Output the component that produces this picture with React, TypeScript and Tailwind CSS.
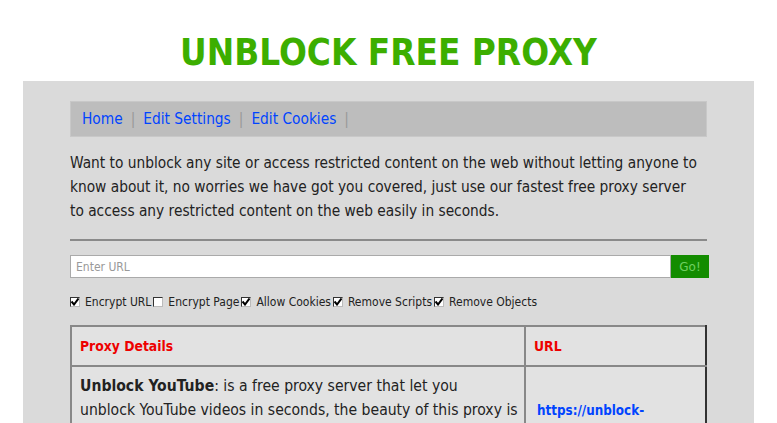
const options = [
  { label: "Encrypt URL", checked: true },
  { label: "Encrypt Page", checked: false },
  { label: "Allow Cookies", checked: true },
  { label: "Remove Scripts", checked: true },
  { label: "Remove Objects", checked: true },
];

const Box = ({ checked }: { checked: boolean }) => (
  <span className="inline-flex h-[10px] w-[10px] shrink-0 items-center justify-center border border-t-[#333] border-l-[#333] border-r-[#bbb] border-b-[#bbb] bg-white">
    {checked && (
      <svg width="8" height="8" viewBox="0 0 8 8">
        <path d="M0.5 3.5 L3 6.5 L7.5 0.5" fill="none" stroke="#000" strokeWidth="2" />
      </svg>
    )}
  </span>
);

export default function App() {
  return (
    <div className="min-h-screen bg-white font-['DejaVu_Sans',sans-serif] text-[#222]">
      <h1 className="pt-[35px] pb-[9.5px] text-center text-[36.5px] leading-[36.5px] font-bold text-[#3cae00] [font-stretch:condensed]">
        UNBLOCK FREE PROXY
      </h1>
      <div className="mx-[23px] bg-[#dadada] px-[47px] pt-[20px] pb-[40px]">
        <div className="flex h-[36px] items-center border border-[#c8c8c8] bg-[#bdbdbd] pl-[11px] text-[15.3px] text-[#0044ff] [font-stretch:condensed]">
          <a className="cursor-pointer">Home</a>
          <span className="mx-[8px] text-[#999]">|</span>
          <a className="cursor-pointer">Edit Settings</a>
          <span className="mx-[8px] text-[#999]">|</span>
          <a className="cursor-pointer">Edit Cookies</a>
          <span className="mx-[8px] text-[#999]">|</span>
        </div>
        <p className="mt-[14px] pr-[5px] text-[15.3px] leading-[24px] [font-stretch:condensed]">
          Want to unblock any site or access restricted content on the web without letting anyone to know about it, no
          worries we have got you covered, just use our fastest free proxy server to access any restricted content on
          the web easily in seconds.
        </p>
        <div className="mt-[16px] h-[2px] bg-[#8a8a8a]" />
        <div className="mt-[14px] flex h-[23px]">
          <div className="flex flex-1 items-center border border-[#aaa] bg-white pl-[5px] text-[12px] text-[#999] [font-stretch:condensed]">
            Enter URL
          </div>
          <div className="-mr-[2px] flex w-[38px] items-center justify-center bg-[#138c00] text-[12px] text-[#6fd060]">
            Go!
          </div>
        </div>
        <div className="mt-[15px] flex items-center text-[12px] [font-stretch:condensed]">
          {options.map((o, i) => (
            <span key={o.label} className={i === 0 ? "flex items-center" : "ml-[2px] flex items-center"}>
              <Box checked={o.checked} />
              <span className="ml-[5px]">{o.label}</span>
            </span>
          ))}
        </div>
        <table className="mt-[14px] w-full border-collapse border-2 border-t-[#888] border-l-[#888] border-r-[#333] border-b-[#333] bg-[#e2e2e2] text-[15.6px] [font-stretch:condensed]">
          <thead>
            <tr>
              <th className="h-[40px] w-[454px] border-b-2 border-r-2 border-[#888] px-[8px] text-left text-[13.8px] font-bold text-[#ee0000]">
                Proxy Details
              </th>
              <th className="border-b-2 border-[#888] px-[8px] text-left text-[13.8px] font-bold text-[#ee0000]">URL</th>
            </tr>
          </thead>
          <tbody>
            <tr>
              <td className="border-r-2 border-[#888] py-[7px] pr-[2px] pl-[8px] align-top leading-[24px]">
                <b>Unblock YouTube</b>: is a free proxy server that let you
                <br />
                unblock YouTube videos in seconds, the beauty of this proxy is that it works on all devices and keeps
                your identity hidden while browsing.
              </td>
              <td className="px-[11px] pt-[32px] align-top text-[13.3px] leading-[24px] font-bold text-[#0044ff]">
                https://unblock-
                <br />
                youtube.org/
              </td>
            </tr>
          </tbody>
        </table>
      </div>
    </div>
  );
}
